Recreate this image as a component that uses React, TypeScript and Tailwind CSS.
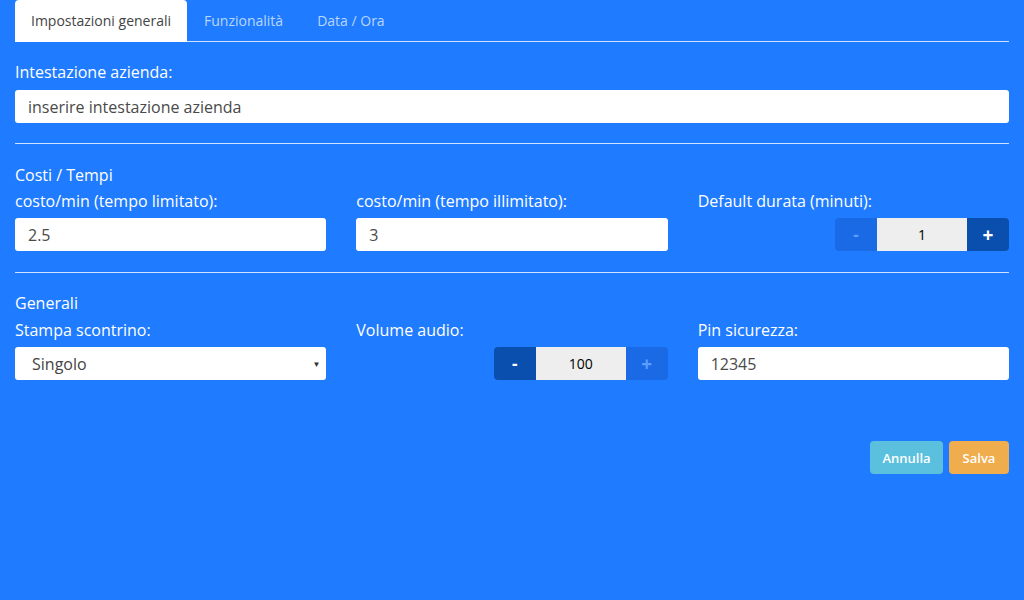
const font = { fontFamily: "'Open Sans', sans-serif" };

function Stepper({ value, minusActive }: { value: string; minusActive: boolean }) {
  const dark = "bg-[#0a4fad] text-white";
  const light = "bg-[#1a6ae6] text-[#5d9dff]";
  return (
    <div className="flex h-[33px] w-[174px] rounded-[4px] overflow-hidden">
      <button className={`w-[42px] text-[17px] font-bold ${minusActive ? dark : light}`}>-</button>
      <div className="w-[90px] bg-[#eeeeee] flex items-center justify-center text-[14px] text-black">
        {value}
      </div>
      <button className={`w-[42px] text-[19px] font-bold ${minusActive ? light : dark}`}>+</button>
    </div>
  );
}

function TextBox({ value }: { value: string }) {
  return (
    <div className="h-[33px] w-full bg-white rounded-[3px] flex items-center px-[13px] text-[16px] text-[#4a4a4a]">
      {value}
    </div>
  );
}

export default function App() {
  return (
    <div className="min-h-[600px] bg-[#1f7bff] px-[15px] text-white leading-[20px]" style={font}>
      <div className="flex h-[42px] border-b border-[#cfe2ff]">
        <div className="w-[172px] h-[42px] bg-white rounded-t-[4px] flex items-center justify-center text-[14px] text-[#444]">
          Impostazioni generali
        </div>
        <div className="px-[17px] flex items-center text-[14px] text-[#b9d6ff]">Funzionalità</div>
        <div className="px-[17px] flex items-center text-[14px] text-[#b9d6ff]">Data / Ora</div>
      </div>

      <div className="pt-[20px] text-[16px]">Intestazione azienda:</div>
      <div className="mt-[8px]">
        <TextBox value="inserire intestazione azienda" />
      </div>

      <div className="mt-[20px] border-t border-[#cfe2ff]" />

      <div className="pt-[21px] text-[16px]">Costi / Tempi</div>
      <div className="grid grid-cols-3 gap-x-[30px] mt-[6px]">
        <div>
          <div className="text-[16px]">costo/min (tempo limitato):</div>
          <div className="mt-[7px]"><TextBox value="2.5" /></div>
        </div>
        <div>
          <div className="text-[16px]">costo/min (tempo illimitato):</div>
          <div className="mt-[7px]"><TextBox value="3" /></div>
        </div>
        <div>
          <div className="text-[16px]">Default durata (minuti):</div>
          <div className="mt-[7px] flex justify-end"><Stepper value="1" minusActive={false} /></div>
        </div>
      </div>

      <div className="mt-[21px] border-t border-[#cfe2ff]" />

      <div className="pt-[20px] text-[16px]">Generali</div>
      <div className="grid grid-cols-3 gap-x-[30px] mt-[7px]">
        <div>
          <div className="text-[16px]">Stampa scontrino:</div>
          <div className="mt-[7px] h-[33px] bg-white rounded-[3px] flex items-center justify-between pl-[17px] pr-[6px] text-[16px] text-[#444]">
            <span>Singolo</span>
            <span className="text-[8px] text-[#333]">▼</span>
          </div>
        </div>
        <div>
          <div className="text-[16px]">Volume audio:</div>
          <div className="mt-[7px] flex justify-end"><Stepper value="100" minusActive={true} /></div>
        </div>
        <div>
          <div className="text-[16px]">Pin sicurezza:</div>
          <div className="mt-[7px]"><TextBox value="12345" /></div>
        </div>
      </div>

      <div className="flex justify-end gap-[6px] mt-[61px]">
        <button className="h-[33px] w-[73px] rounded-[4px] bg-[#5bc0de] text-[13px] font-semibold text-white">Annulla</button>
        <button className="h-[33px] w-[60px] rounded-[4px] bg-[#f0ad4e] text-[13px] font-semibold text-white">Salva</button>
      </div>
    </div>
  );
}
